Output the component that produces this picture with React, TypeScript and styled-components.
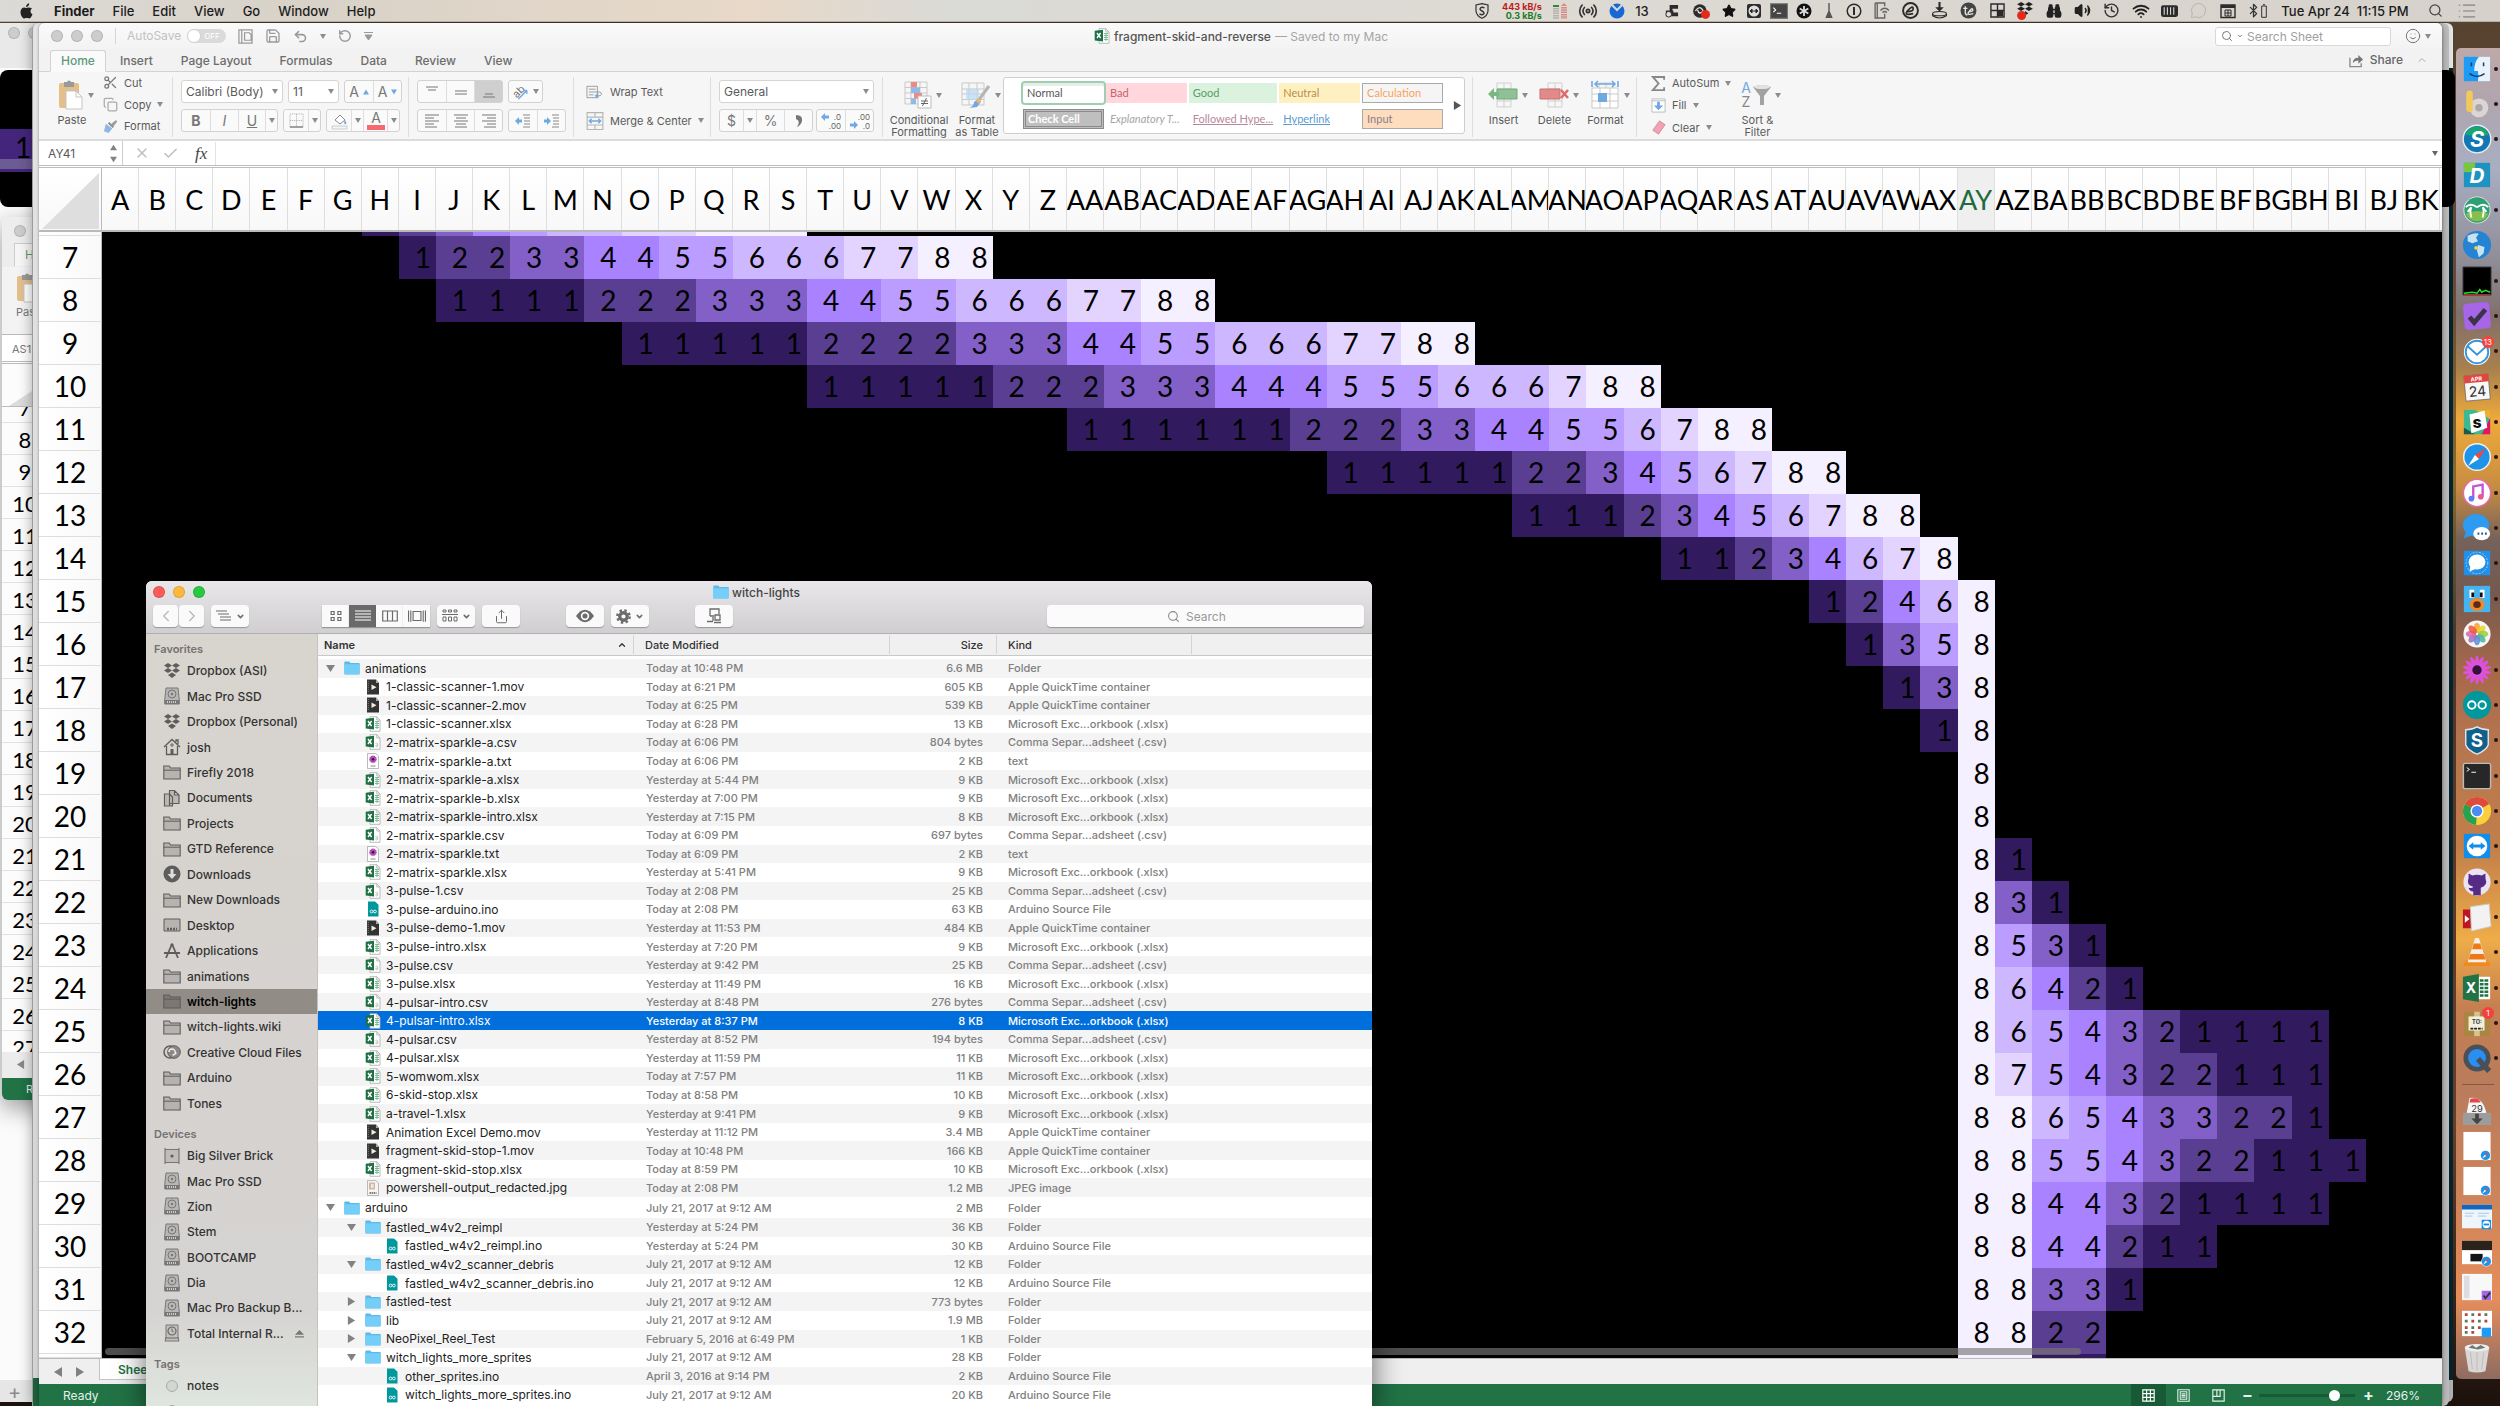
import React from "react";
import styled, { createGlobalStyle, css } from "styled-components";
import {
  Search, Wifi, Bluetooth, Volume2, Star, MessageCircle, Share, ChevronDown, ChevronLeft, ChevronRight,
  ChevronUp, Radio, Binoculars, Smile, Check, X, Undo2, RotateCcw, Save, List, History, Scissors, Copy,
} from "lucide-react";

const UI = `Inter, "Liberation Sans", sans-serif`;
const SHEET = `Lato, "Open Sans", sans-serif`;

const Global = createGlobalStyle`
  * { box-sizing: border-box; }
  html, body { margin: 0; height: 100%; overflow: hidden; }
  body { font-family: ${UI}; font-size: 12px; color: #333; background: #3a2a20; }
  button, input, select { font-family: inherit; font-size: inherit; color: inherit; border: 0; background: none; padding: 0; margin: 0; appearance: none; outline: 0; }
  a { color: inherit; text-decoration: none; }
  svg { display: block; flex: none; }
`;

/* ---------- desktop ---------- */

const Desktop = styled.main`
  position: relative;
  height: 100vh;
  overflow: hidden;
  background: linear-gradient(180deg, #54422f 0, #6b4a35 20%, #8a6a2c 34%, #4b382c 45%, #5c3826 60%, #6b3f28 80%, #1c110c 100%);
`;

const MenuBar = styled.header`
  position: absolute;
  inset: 0 0 auto 0;
  height: 22px;
  display: flex;
  align-items: center;
  padding: 0 17px 0 19px;
  background: linear-gradient(90deg, #dcdad6 0, #d8d2c8 12%, #e8d9c9 30%, #dadad6 38%, #dedad4 60%, #d6d2cb 100%);
  border-bottom: 1px solid #b5afa8;
  color: #1c1c1c;
  font-size: 13px;
`;
const MenuList = styled.nav`
  display: flex;
  gap: 18px;
  margin-left: 20px;
`;
const MenuItem = styled.button<{ $bold?: boolean }>`
  font-size: 13px;
  line-height: 20px;
  font-weight: ${(p) => (p.$bold ? 700 : 500)};
`;
const StatusArea = styled.div`
  display: flex;
  align-items: center;
  margin-left: auto;
`;
const StatusItem = styled.span<{ $w: number }>`
  width: ${(p) => p.$w}px;
  display: flex;
  align-items: center;
  justify-content: center;
  white-space: nowrap;
  font-weight: 500;
`;
const NetSpeed = styled.span`
  display: flex;
  flex-direction: column;
  text-align: right;
  font-size: 9px;
  line-height: 9px;
  font-weight: 700;
  color: #c01818;
  & > span + span { color: #1b7a25; }
`;

/* ---------- windows behind ---------- */

const RearWindow = styled.div`
  position: absolute;
  inset: 23px 47px 4px 0;
  display: flex;
  flex-direction: column;
  border-radius: 0 6px 6px 0;
  background: linear-gradient(90deg, #fbfbfb 50%, #06242e 50%);
  overflow: hidden;
`;
const RearHeader = styled.div`
  height: 45px;
  display: flex;
  gap: 8px;
  padding: 4px 0 0 8px;
  background: #e9e9e9;
`;
const RearFooter = styled.div`
  height: 22px;
  margin-top: auto;
  padding-left: 8px;
  background: linear-gradient(90deg, #e6e6e6 50%, #b5b5b5 50%);
  font-size: 20px;
  line-height: 24px;
  color: #8a8a8a;
`;
const SideWindow = styled.div`
  position: absolute;
  inset: 23px 51px 0 40px;
  border-radius: 6px;
  background: #c6c6c6;
`;
const Player = styled.div`
  position: absolute;
  inset: 70px 45px auto 0;
  height: 137px;
  padding-top: 59px;
  border-radius: 8px;
  background: #000;
`;
const PlayerCell = styled.div`
  width: 60px;
  height: 43px;
  padding-left: 15px;
  background: linear-gradient(180deg, #43267c 30px, #6c5c94 30px 40px, #43267c 40px);
  font: 28px/36px ${SHEET};
  color: #000;
`;
const BackBook = styled.div`
  position: absolute;
  left: 2px;
  top: 217px;
  width: 80px;
  height: 883px;
  display: flex;
  flex-direction: column;
  border-radius: 6px;
  overflow: hidden;
  background: #fcfcfc;
  box-shadow: 0 8px 24px rgba(0, 0, 0, 0.4);
  color: #777;
`;
const BackTop = styled.div`
  height: 50px;
  padding: 8px 0 0 12px;
  background: #ededed;
  display: flex;
  flex-direction: column;
  gap: 6px;
`;
const BackTab = styled.span`
  padding-left: 10px;
  background: #f6f6f6;
  border: 1px solid #ccc;
  border-bottom: 0;
  line-height: 22px;
  font-size: 12px;
  color: #5d9b78;
`;
const BackRibbon = styled.div`
  height: 68px;
  padding: 6px 0 0 14px;
  background: #f3f3f3;
  border-bottom: 1px solid #bbb;
  font-size: 11px;
  line-height: 18px;
`;
const BackName = styled.div`
  height: 29px;
  padding-left: 10px;
  border-bottom: 3px double #bbb;
  background: #fff;
  line-height: 28px;
  font-size: 11px;
`;
const BackCorner = styled.div`
  height: 43px;
  padding: 16px 0 0 7px;
  border-bottom: 1px solid #bbb;
`;
const BackRows = styled.div`
  flex: 1;
  overflow: hidden;
  display: flex;
  flex-direction: column;
  font: 22px/33px ${SHEET};
  color: #000;
`;
const BackRow = styled.span<{ $first?: boolean }>`
  flex: none;
  width: 46px;
  height: ${(p) => (p.$first ? 16 : 32)}px;
  text-align: center;
  border-bottom: 1px solid #e2e2e2;
  ${(p) => p.$first && css`line-height: 2px; overflow: hidden;`}
`;
const BackTabs = styled.div`
  height: 26px;
  padding: 8px 0 0 14px;
  background: #ececec;
`;
const BackStatus = styled.div`
  height: 22px;
  padding-left: 24px;
  background: #217346;
  color: #e8f3ec;
  font-size: 11px;
  line-height: 22px;
`;
const ShadeWindow = styled.div`
  position: absolute;
  inset: 23px 58px 0 32px;
  border-radius: 6px 6px 0 0;
  background: linear-gradient(180deg, #e4e4e4 0, #d3d3d3 98%, #1c5f3a 98%);
  border-left: 1px solid #9c9c9c;
  box-shadow: 0 0 14px rgba(0, 0, 0, 0.35);
`;

/* ---------- workbook ---------- */

const Workbook = styled.section`
  position: absolute;
  inset: 23px 58px 0 39px;
  display: flex;
  flex-direction: column;
  border-radius: 6px 6px 0 0;
  overflow: hidden;
  background: #f5f5f5;
  box-shadow: 0 0 3px rgba(0, 0, 0, 0.4);
  color: #5a5a5a;
`;
const TitleRow = styled.div`
  height: 26px;
  display: grid;
  grid-template-columns: 1fr auto 1fr;
  align-items: center;
  padding: 0 11px 0 12px;
  background: linear-gradient(180deg, #fafafa, #f3f3f3);
`;
const QuickTools = styled.div`
  display: flex;
  align-items: center;
  gap: 12px;
  color: #9a9a9a;
`;
const Lights = styled.div`
  display: flex;
  gap: 8px;
`;
const Light = styled.span<{ $c?: string }>`
  width: 12px;
  height: 12px;
  border-radius: 50%;
  background: ${(p) => p.$c || "#cdcdcd"};
  border: 1px solid rgba(0, 0, 0, 0.12);
`;
const AutoSave = styled.label`
  display: flex;
  align-items: center;
  gap: 6px;
  padding-left: 11px;
  border-left: 1px solid #d6d6d6;
  line-height: 16px;
  font-size: 12px;
  color: #c2c2c2;
`;
const Toggle = styled.span`
  display: flex;
  align-items: center;
  gap: 3px;
  width: 39px;
  height: 14px;
  border-radius: 7px;
  background: #dadada;
  font-size: 8px;
  color: #fff;
  input { width: 14px; height: 14px; border-radius: 50%; background: #fff; border: 1px solid #d0d0d0; }
`;
const DocTitle = styled.h1`
  display: flex;
  align-items: center;
  gap: 4px;
  margin: 0;
  font-size: 12px;
  font-weight: 500;
  color: #555;
  span { font-weight: 400; color: #a5a5a5; }
`;
const TitleRight = styled.div`
  display: flex;
  justify-content: flex-end;
  align-items: center;
  gap: 14px;
  color: #777;
`;
const Feedback = styled.button`
  display: flex;
  align-items: center;
  gap: 4px;
`;
const SheetSearch = styled.label`
  display: flex;
  align-items: center;
  gap: 4px;
  width: 176px;
  height: 19px;
  padding: 0 5px;
  border: 1px solid #d8d8d8;
  border-radius: 3px;
  background: #fff;
  input { flex: 1; min-width: 0; font-size: 12px; }
  input::placeholder { color: #a0a0a0; opacity: 1; }
`;
const TabRow = styled.div`
  height: 23px;
  display: flex;
  align-items: flex-end;
  padding: 0 14px 0 11px;
  border-bottom: 1px solid #d2d2d2;
  background: #f2f2f2;
`;
const RibbonTab = styled.button<{ $on?: boolean }>`
  height: 22px;
  padding: 0 ${(p) => (p.$on ? 10 : 14)}px;
  margin-bottom: -1px;
  font-size: 12px;
  line-height: 20px;
  font-weight: 500;
  color: #6c6c6c;
  ${(p) =>
    p.$on &&
    css`
      background: #fafafa;
      border: 1px solid #d2d2d2;
      border-bottom-color: #fafafa;
      border-radius: 3px 3px 0 0;
      color: #5d9b78;
    `}
`;
const ShareBox = styled.div`
  display: flex;
  align-items: center;
  gap: 6px;
  margin-left: auto;
  button { line-height: 22px; font-weight: 500; color: #666; }
`;
const Ribbon = styled.div`
  height: 69px;
  display: flex;
  padding-top: 5px;
  border-bottom: 2px solid #dcdcdc;
  background: #f6f6f6;
`;
const Group = styled.div<{ $w?: number; $pad?: number }>`
  width: ${(p) => (p.$w ? p.$w + "px" : "auto")};
  padding-left: ${(p) => p.$pad ?? 9}px;
  height: 60px;
  display: flex;
  border-right: 1px solid #dedede;
`;
const Rows = styled.div`
  display: flex;
  flex-direction: column;
  gap: 6px;
  padding-top: 3px;
`;
const Line = styled.div<{ $gap?: number }>`
  display: flex;
  gap: ${(p) => p.$gap ?? 5}px;
  height: 23px;
`;
const Combo = styled.label<{ $w: number }>`
  width: ${(p) => p.$w}px;
  height: 23px;
  display: flex;
  align-items: center;
  padding: 0 4px;
  border: 1px solid #d4d4d4;
  border-radius: 3px;
  background: #fff;
  select { flex: 1; min-width: 0; height: 21px; font-size: 12px; }
`;
const Seg = styled.div`
  display: flex;
  height: 23px;
  border: 1px solid #d2d2d2;
  border-radius: 3px;
  background: #fafafa;
`;
const SegButton = styled.button<{ $w?: number; $on?: boolean }>`
  width: ${(p) => p.$w ?? 28}px;
  height: 21px;
  display: flex;
  align-items: center;
  justify-content: center;
  gap: 4px;
  font-size: 14px;
  color: #777;
  background: ${(p) => (p.$on ? "#cfcfcf" : "transparent")};
  & + & { border-left: 1px solid #dedede; }
`;
const StackList = styled.div`
  display: flex;
  flex-direction: column;
  margin-top: -5px;
`;
const StackItem = styled.button`
  height: 23px;
  display: flex;
  align-items: center;
  gap: 6px;
  font-size: 11px;
  color: #5a5a5a;
  white-space: nowrap;
`;
const BigItem = styled.button<{ $w: number }>`
  width: ${(p) => p.$w}px;
  height: 61px;
  display: flex;
  flex-direction: column;
  align-items: center;
  padding-top: 3px;
  font-size: 11px;
  line-height: 12px;
  color: #5a5a5a;
`;
const BigIcon = styled.span`
  display: flex;
  align-items: center;
  gap: 4px;
  height: 30px;
  margin-bottom: 4px;
  padding-left: 8px;
`;
const Gallery = styled.div`
  display: flex;
  align-items: center;
  gap: 10px;
  width: 462px;
  height: 57px;
  padding-left: 19px;
  border: 1px solid #cfcfcf;
  border-radius: 3px;
  background: #fff;
`;
const Styles = styled.div`
  width: 420px;
  display: grid;
  grid-template-columns: repeat(5, 1fr);
  gap: 6px 2px;
`;
const StyleCell = styled.button<{ $bg?: string; $fg: string; $kind?: string }>`
  height: 20px;
  padding: 0 4px;
  text-align: left;
  font-family: ${SHEET};
  font-size: 11px;
  line-height: 18px;
  white-space: nowrap;
  color: ${(p) => p.$fg};
  background: ${(p) => p.$bg || "transparent"};
  ${(p) => p.$kind === "selected" && css`outline: 2px solid #a3cdb3; border-radius: 2px; box-shadow: inset 0 3px #e3efe7;`}
  ${(p) => p.$kind === "boxed" && css`border: 1px solid #aaa; line-height: 16px;`}
  ${(p) => p.$kind === "double" && css`border: 3px double #8a8a8a; line-height: 12px; font-weight: 700; padding: 0 2px;`}
  ${(p) => p.$kind === "link" && css`text-decoration: underline;`}
  ${(p) => p.$kind === "note" && css`font-style: italic;`}
`;
const FormulaBar = styled.div`
  height: 27px;
  display: flex;
  align-items: center;
  padding: 0 4px 0 9px;
  border-bottom: 3px double #bdbdbd;
  background: #fff;
`;
const NameBox = styled.div`
  width: 75px;
  height: 24px;
  display: flex;
  align-items: center;
  justify-content: space-between;
  padding-right: 5px;
  border-right: 1px solid #ccc;
  input { width: 50px; font-size: 12px; }
`;
const Spinner = styled.span`
  display: flex;
  flex-direction: column;
  gap: 5px;
`;
const FormulaActions = styled.div`
  display: flex;
  align-items: center;
  gap: 12px;
  padding: 0 8px 0 11px;
  color: #bdbdbd;
  border-right: 1px solid #e4e4e4;
`;
const Fx = styled.button`
  font: italic 17px/23px "Liberation Serif", serif;
  color: #444;
  padding-left: 4px;
`;
const FormulaInput = styled.input`
  flex: 1;
  height: 23px;
`;

/* ---------- sheet grid ---------- */

const SHADES = ["#000", "#311b5e", "#5a3e92", "#8360c8", "#a982ff", "#bb9dff", "#cdb7fe", "#e2d3ff", "#f5f0ff"];

const SheetArea = styled.div`
  flex: 1;
  min-height: 0;
  position: relative;
  overflow: hidden;
  background: #000;
`;
const SheetTable = styled.table`
  display: block;
  font-family: ${SHEET};
  font-size: 28px;
  color: #000;
  thead, tbody { display: block; }
`;
const SheetRow = styled.tr<{ $h: number }>`
  display: grid;
  grid-template-columns: 63px repeat(63, 1fr);
  height: ${(p) => p.$h}px;
  padding-right: 2px;
`;
const HeadRow = styled(SheetRow)`
  background: linear-gradient(180deg, #fff, #f8f8f8);
  border-bottom: 2px solid #b9b9b9;
`;
const ColHead = styled.th<{ $on?: boolean }>`
  padding: 0;
  display: flex;
  justify-content: center;
  align-items: center;
  min-width: 0;
  overflow: hidden;
  font-weight: 400;
  font-size: 27px;
  border-right: 1px solid #dedede;
  background: ${(p) => (p.$on ? "#efefef" : "transparent")};
  color: ${(p) => (p.$on ? "#1e6b40" : "#000")};
`;
const Corner = styled.th`
  padding: 0 2px 1px 4px;
  display: flex;
  align-items: flex-end;
  justify-content: flex-end;
  border-right: 1px solid #b9b9b9;
`;
const RowHead = styled.th`
  padding: 0;
  font-weight: 400;
  text-align: center;
  line-height: 42px;
  overflow: hidden;
  background: linear-gradient(90deg, #fff, #f9f9f9);
  border-bottom: 1px solid #dedede;
  border-right: 1px solid #b9b9b9;
`;
const Blank = styled.td<{ $span: number }>`
  padding: 0;
  grid-column: span ${(p) => p.$span};
`;
const Cell = styled.td<{ $v: number }>`
  padding: 0 5px 0 0;
  min-width: 0;
  overflow: hidden;
  text-align: right;
  line-height: 43px;
  background: ${(p) => SHADES[p.$v]};
`;
const ScrollThumb = styled.div`
  position: absolute;
  left: 66px;
  right: 361px;
  bottom: 3px;
  height: 7px;
  border-radius: 4px;
  background: rgba(120, 120, 120, 0.65);
`;
const SheetTabs = styled.div`
  height: 26px;
  display: flex;
  align-items: center;
  gap: 12px;
  padding-left: 14px;
  border-top: 1px solid #bbb;
  background: #efefef;
`;
const SheetTab = styled.button`
  align-self: flex-start;
  height: 21px;
  width: 96px;
  margin-left: 2px;
  padding-left: 18px;
  text-align: left;
  font-size: 12px;
  font-weight: 600;
  color: #217346;
  background: #fff;
  border: 1px solid #c4c4c4;
  border-top: 0;
`;
const StatusBar = styled.footer`
  height: 22px;
  display: flex;
  align-items: center;
  padding: 0 22px 0 24px;
  background: #217346;
  color: #e5f2ea;
`;
const ViewButtons = styled.div`
  display: flex;
  margin-left: auto;
`;
const ViewButton = styled.button<{ $on?: boolean }>`
  width: 35px;
  height: 22px;
  display: flex;
  align-items: center;
  justify-content: center;
  background: ${(p) => (p.$on ? "#185a35" : "transparent")};
`;
const Zoom = styled.div`
  display: flex;
  align-items: center;
  gap: 8px;
  padding-left: 6px;
  button { width: 9px; font-size: 16px; font-weight: 700; line-height: 20px; }
  input { width: 96px; height: 12px; background: linear-gradient(#185a35, #185a35) center / 100% 3px no-repeat; }
  input::-webkit-slider-thumb { appearance: none; width: 11px; height: 11px; border-radius: 50%; background: #fff; }
  output { padding-left: 6px; }
`;

/* ---------- finder ---------- */

const FinderWin = styled.section`
  position: absolute;
  left: 146px;
  top: 581px;
  bottom: 0;
  width: 1226px;
  display: flex;
  flex-direction: column;
  border-radius: 6px 6px 0 0;
  overflow: hidden;
  background: #fff;
  box-shadow: 0 10px 30px rgba(0, 0, 0, 0.6);
`;
const FinderTop = styled.header`
  height: 53px;
  background: linear-gradient(180deg, #e9e7e9, #d0ced0);
  border-bottom: 1px solid #b0aeb0;
`;
const FinderTitle = styled.div`
  height: 22px;
  display: grid;
  grid-template-columns: 1fr auto 1fr;
  align-items: center;
  padding: 0 12px 0 7px;
  h2 { display: flex; align-items: center; gap: 3px; margin: 0; font-size: 12px; font-weight: 500; color: #444; }
`;
const FinderTools = styled.div`
  display: flex;
  align-items: center;
  height: 26px;
  padding: 0 8px 0 7px;
  color: #6b6b6b;
`;
const ToolSet = styled.div<{ $before?: number; $split?: boolean }>`
  display: flex;
  gap: ${(p) => (p.$split ? 1 : 0)}px;
  margin-left: ${(p) => p.$before ?? 0}px;
`;
const Tool = styled.button<{ $w: number; $on?: boolean; $joined?: boolean }>`
  width: ${(p) => p.$w}px;
  height: 22px;
  display: flex;
  align-items: center;
  justify-content: center;
  gap: 4px;
  border-radius: ${(p) => (p.$joined ? 0 : 4)}px;
  background: ${(p) => (p.$on ? "#6a6a6a" : "#fafafa")};
  color: ${(p) => (p.$on ? "#fff" : "inherit")};
  box-shadow: 0 1px 1px rgba(0, 0, 0, 0.28);
`;
const FinderSearch = styled.label`
  display: flex;
  align-items: center;
  justify-content: center;
  gap: 6px;
  width: 317px;
  height: 22px;
  margin-left: auto;
  border-radius: 4px;
  background: #fbfbfb;
  box-shadow: 0 1px 1px rgba(0, 0, 0, 0.28);
  input { width: 58px; font-size: 12px; }
  input::placeholder { color: #999; opacity: 1; }
`;
const FinderBody = styled.div`
  flex: 1;
  min-height: 0;
  display: flex;
`;
const Sidebar = styled.nav`
  width: 172px;
  flex: none;
  overflow: hidden;
  padding-top: 6px;
  border-right: 1px solid #c6c2c0;
  background: linear-gradient(180deg, #d8d4ce 0, #d5d2d0 60%, #d6d4d2 88%, #dfe5df 100%);
  h3 { margin: 0; padding: 0 8px; height: 18px; font-size: 11px; line-height: 18px; font-weight: 600; color: #747170; }
`;
const SideList = styled.ul<{ $h: number }>`
  list-style: none;
  margin: 0 0 9px;
  padding: 0;
  height: ${(p) => p.$h}px;
  display: grid;
  grid-auto-rows: 1fr;
`;
const SideItem = styled.li<{ $on?: boolean }>`
  display: flex;
  align-items: center;
  padding: 0 13px 0 17px;
  background: ${(p) => (p.$on ? "#918c86" : "transparent")};
  color: ${(p) => (p.$on ? "#000" : "#333")};
  font-weight: ${(p) => (p.$on ? 600 : 500)};
  a { display: flex; flex: 1; align-items: center; gap: 6px; min-width: 0; white-space: nowrap; font-size: 12px; }
`;
const FileTable = styled.table`
  display: block;
  flex: 1;
  min-width: 0;
  overflow: hidden;
  font-size: 11px;
  thead, tbody { display: block; }
`;
const fileColumns = css`
  display: grid;
  grid-template-columns: 316px 256px 107px 195px 1fr;
`;
const FileHead = styled.tr`
  ${fileColumns}
  height: 22px;
  margin-bottom: 3px;
  background: #f1f0f1;
  border-bottom: 1px solid #c9c9c9;
  th { display: flex; align-items: center; justify-content: space-between; margin: 1px 0; padding: 0 10px 0 11px; font-weight: 500; color: #333; border-right: 1px solid #d4d4d4; }
  th:first-child { padding: 0 6px; font-weight: 600; }
  th:nth-child(3) { justify-content: flex-end; padding-right: 13px; }
  th:last-child { border: 0; }
`;
const FileBody = styled.tbody<{ $h: number }>`
  && { display: grid; }
  height: ${(p) => p.$h}px;
  grid-auto-rows: 1fr;
`;
const FileRow = styled.tr<{ $on?: boolean; $alt?: boolean }>`
  ${fileColumns}
  background: ${(p) => (p.$on ? "#006edb" : p.$alt ? "#f4f4f5" : "#fff")};
  color: ${(p) => (p.$on ? "#fff" : "#808080")};
  td { display: flex; align-items: center; min-width: 0; padding: 0 0 0 12px; white-space: nowrap; font-weight: 500; }
  td:first-child { color: ${(p) => (p.$on ? "#fff" : "#222")}; font-size: 12px; font-weight: 400; }
  td:nth-child(3) { justify-content: flex-end; padding: 0 14px 0 0; }
  td:nth-child(4) { padding-left: 11px; }
`;
const NameCell = styled.td<{ $depth: number }>`
  && { padding-left: ${(p) => 8 + p.$depth * 21}px; gap: 5px; }
`;
const Slot = styled.span<{ $w: number }>`
  flex: none;
  display: flex;
  width: ${(p) => p.$w}px;
`;

/* ---------- dock ---------- */

const Dock = styled.aside`
  position: absolute;
  right: 0;
  top: 48px;
  bottom: 27px;
  width: 44px;
  display: flex;
  flex-direction: column;
  padding: 3px 0;
  border-radius: 5px 0 0 5px;
  background: linear-gradient(180deg, #bfa9a9 0, #b0a5ae 4%, #a9aec2 9%, #8f8d98 16%, #80706c 20%, #a87f4e 24%, #f0aa3a 28%, #c78c42 33%, #75625a 37%, #75594f 41%, #a8694a 47%, #b5754f 52%, #c27f4a 60%, #efac48 67%, #c67f50 72%, #b97c5c 78%, #cc845a 86%, #e68d5c 94%, #8d6c62 100%);
`;
const DockItem = styled.button`
  flex: 1;
  min-height: 0;
  position: relative;
  display: flex;
  align-items: center;
  padding-left: 6px;
`;
const Running = styled.i`
  width: 4px;
  height: 4px;
  margin-left: 2px;
  border-radius: 50%;
  background: #2b1410;
`;
const DockRule = styled.hr`
  width: 32px;
  height: 1px;
  margin: 8px 0 8px 6px;
  border: 0;
  background: #8d5538;
`;
const Badge = styled.span`
  position: absolute;
  top: 2px;
  right: 6px;
  min-width: 12px;
  height: 12px;
  padding: 0 2px;
  border-radius: 6px;
  background: #f5413c;
  color: #fff;
  font-size: 8px;
  line-height: 12px;
  text-align: center;
`;

/* ---------- icons ---------- */

const Svg = ({ w = 16, h, vb = "0 0 16 16", children }: { w?: number; h?: number; vb?: string; children?: React.ReactNode }) => (
  <svg width={w} height={h ?? w} viewBox={vb} fill="none" aria-hidden="true">{children}</svg>
);
const Caret = ({ c = "#8c8c8c" }: { c?: string }) => <Svg w={6} h={5} vb="0 0 6 5"><path d="M0 0h6L3 5z" fill={c} /></Svg>;
const Tri = ({ dir = "down", c = "#828282", s = 9 }: { dir?: string; c?: string; s?: number }) => (
  <Svg w={s} vb="0 0 10 10">
    <path d={dir === "down" ? "M0 1h10L5 9z" : dir === "right" ? "M1 0v10l8-5z" : dir === "left" ? "M9 0v10L1 5z" : "M0 9h10L5 1z"} fill={c} />
  </Svg>
);
const Lines = ({ rows, w = 16, c = "#777" }: { rows: number[][]; w?: number; c?: string }) => (
  <Svg w={w}>{rows.map(([x, y, l], i) => <path key={i} d={`M${x} ${y}h${l}`} stroke={c} strokeWidth="1.2" />)}</Svg>
);
const ExcelDoc = ({ kind = "xlsx", s = 16 }: { kind?: string; s?: number }) => (
  <Svg w={s}>
    <path d="M5 .7h6.8L15 4v11.3H5z" fill="#fff" stroke="#a9a9a9" strokeWidth=".8" />
    <path d="M11.8.7V4H15" stroke="#a9a9a9" strokeWidth=".8" />
    {kind === "xlsx"
      ? <path d="M10 5.5h4M10 7.5h4M10 9.5h4M10 11.5h4M12 5v8" stroke="#7dba92" strokeWidth="1" />
      : <path d="M10.5 9.5q1.500-1 2.200.2v3M12.700 11q-2.400 0-2 1.300t2 0" stroke="#b7b7b7" strokeWidth=".8" />}
    <path d="M.7 2.8 9 1.800v11.600L.7 12.400z" fill="#1f7145" />
    <path d="m3 5 3.600 5M6.600 5 3 10" stroke="#fff" strokeWidth="1.400" />
  </Svg>
);
const MovDoc = () => (
  <Svg><path d="M2 .5h9L14 4v11.5H2z" fill="#333" /><path d="M3.200 2v12" stroke="#999" strokeWidth=".9" strokeDasharray="1 1" /><path d="M11 .5V4h3z" fill="#aaa" /><path d="m6.500 5.500 5 2.700-5 2.700z" fill="#f6eed6" /></Svg>
);
const TxtDoc = () => (
  <Svg><path d="M2.500.5h8.300L13.500 3v12.500h-11z" fill="#fff" stroke="#aaa" strokeWidth=".8" />
    {[0, 30, 60, 90, 120, 150].map((a) => <ellipse key={a} cx="8" cy="6.3" rx="4" ry="1.1" fill="#b148b8" transform={`rotate(${a} 8 6.3)`} />)}
    <circle cx="8" cy="6.3" r="1.2" fill="#33123a" /><path d="M5.500 13h5" stroke="#888" /></Svg>
);
const InoDoc = () => (
  <Svg><path d="M3 .5h7l3.500 3.300v11.700H3z" fill="#00979d" /><circle cx="6.600" cy="10.500" r="1.400" stroke="#fff" strokeWidth=".9" /><circle cx="9.900" cy="10.500" r="1.400" stroke="#fff" strokeWidth=".9" /></Svg>
);
const JpgDoc = () => (
  <Svg><path d="M2.500.5h8.300L13.500 3v12.500h-11z" fill="#f7f5f2" stroke="#aaa" strokeWidth=".8" /><path d="M4 2.500h6v7H4z" fill="#cfb9a6" /><path d="M6 4h2.500v4H6z" fill="#f0e8e0" /><path d="M4.500 13h7" stroke="#555" strokeWidth="1.600" strokeDasharray="1.500 .6" /></Svg>
);
const Folder = ({ s = 16 }: { s?: number }) => (
  <Svg w={s}><path d="M.3 2.200q0-.7.7-.7h4.200l1.300 1.400H15q.7 0 .7.7v10.200q0 .7-.7.7H1q-.7 0-.7-.7z" fill="#5db9ea" /><path d="M.3 4.200h15.400v9.400q0 .7-.7.7H1q-.7 0-.7-.7z" fill="#74cef8" /></Svg>
);
const FILE_ICONS: Record<string, React.ReactNode> = { mov: <MovDoc />, xlsx: <ExcelDoc />, csv: <ExcelDoc kind="csv" />, txt: <TxtDoc />, ino: <InoDoc />, jpg: <JpgDoc />, dir: <Folder /> };

const G = "#5f5d5b";
const SIDE_ICONS: Record<string, React.ReactNode> = {
  dropbox: <Svg w={18} vb="0 0 18 18"><path d="m5 1 4 2.400L5 6 1 3.500zM13 1l4 2.500L13 6 9 3.400zM5 6l4 2.600L5 11 1 8.500zM13 6l4 2.500-4 2.500-4-2.400zM9 10.500l4 2.500-4 3-4-3z" fill={G} /></Svg>,
  disk: <Svg w={18} vb="0 0 18 18"><path d="M3 1h12l1.300 12v4H1.700v-4z" fill="#b9b7b5" stroke="#777" /><circle cx="9" cy="7" r="4" stroke="#777" /><circle cx="9" cy="7" r="1.200" fill="#777" /><path d="M2 13h14v4H2z" fill="#777" /><path d="M4 15h10" stroke="#ccc" strokeWidth="2" strokeDasharray="1 1" /></Svg>,
  home: <Svg w={18} vb="0 0 18 18"><path d="M1 9 9 1.500 17 9M3.500 8v8.500h11V8M13 4V2h2v4" stroke={G} strokeWidth="1.300" /><path d="M7.500 11h3v5.500h-3z" fill={G} /><circle cx="9" cy="7" r="1.200" stroke={G} /></Svg>,
  folder: <Svg w={18} vb="0 0 18 18"><path d="M.8 3h5.400l1.400 2h9.600v11H.8z" fill="rgba(0,0,0,.15)" stroke={G} strokeWidth="1.100" /><path d="M.8 7.200h16.400" stroke={G} /></Svg>,
  docs: <Svg w={18} vb="0 0 18 18"><path d="M1.500 5h5v12h-5zM6.500 1.500h5L16 6v8.500H6.500zM11.500 1.500V6H16M6.500 5l3 3v9h-3" stroke={G} strokeWidth="1.200" fill="rgba(0,0,0,.12)" /></Svg>,
  down: <Svg w={18} vb="0 0 18 18"><circle cx="9" cy="9" r="8.500" fill={G} /><path d="M9 4v7" stroke="#ddd" strokeWidth="3" /><path d="M4.500 9h9L9 14z" fill="#ddd" /></Svg>,
  desktop: <Svg w={18} vb="0 0 18 18"><path d="M1 3h16v12H1z" fill="rgba(0,0,0,.15)" stroke={G} /><path d="M4 13h10" stroke={G} strokeWidth="2.500" strokeDasharray="2 1" /></Svg>,
  apps: <Svg w={18} vb="0 0 18 18"><path d="M9 2 3 16M9 2l6 14M1 11h16" stroke={G} strokeWidth="1.800" /><circle cx="9" cy="2.800" r="1.500" fill={G} /></Svg>,
  cloud: <Svg w={18} vb="0 0 18 18"><circle cx="7" cy="9" r="6" stroke={G} strokeWidth="1.500" /><circle cx="11" cy="9" r="6.300" fill="#8b8987" stroke={G} /><path d="M6 9q0-3 3-3t4 5M12.500 9q0 3-3 3" stroke="#eee" strokeWidth="1.400" /></Svg>,
  brick: <Svg w={18} vb="0 0 18 18"><path d="M2 1v16M16 1v16M2 2.500h14v13H2z" fill="rgba(0,0,0,.1)" stroke="#777" strokeWidth="1.200" /><circle cx="9" cy="9" r="1.600" fill={G} /></Svg>,
  time: <Svg w={18} vb="0 0 18 18"><path d="M3 1h12v12l1 4H2l1-4z" fill="#c3c1bf" stroke="#777" /><circle cx="9" cy="7" r="4" stroke="#666" strokeWidth="1.200" /><path d="M9 4.500V7l1.500 1M2 14h14" stroke="#666" /></Svg>,
  tag: <Svg w={18} vb="0 0 18 18"><circle cx="9" cy="9" r="5.500" fill="#d3d6d2" stroke="#a9aca9" /></Svg>,
};

/* ---------- data ---------- */

const ROWS: [number, number, string][] = [
  [6, 7, "123456677888"], [7, 8, "1223344556667788"], [8, 9, "111122233344556667788"], [9, 14, "11111222233344556667788"],
  [10, 19, "11111222333444555666788"], [11, 26, "1111112223344556788"], [12, 33, "11111223456788"], [13, 38, "11123456788"],
  [14, 42, "11234678"], [15, 46, "12468"], [16, 47, "1358"], [17, 48, "138"], [18, 49, "18"], [19, 50, "8"], [20, 50, "8"],
  [21, 50, "81"], [22, 50, "831"], [23, 50, "8531"], [24, 50, "86421"], [25, 50, "8654321111"], [26, 50, "8754322111"],
  [27, 50, "8865433221"], [28, 50, "88554322111"], [29, 50, "8844321111"], [30, 50, "8844211"], [31, 50, "88331"], [32, 50, "8822"], [33, 50, "8811"],
];
const colName = (i: number) => (i < 26 ? "" : String.fromCharCode(64 + Math.floor(i / 26))) + String.fromCharCode(65 + (i % 26));
const COLS = Array.from({ length: 63 }, (_, i) => colName(i));

type F = [depth: number, name: string, date: string, size: string, open?: boolean];
const FILES: F[] = [
  [0, "animations", "Today at 10:48 PM", "6.6 MB", true],
  [1, "1-classic-scanner-1.mov", "Today at 6:21 PM", "605 KB"],
  [1, "1-classic-scanner-2.mov", "Today at 6:25 PM", "539 KB"],
  [1, "1-classic-scanner.xlsx", "Today at 6:28 PM", "13 KB"],
  [1, "2-matrix-sparkle-a.csv", "Today at 6:06 PM", "804 bytes"],
  [1, "2-matrix-sparkle-a.txt", "Today at 6:06 PM", "2 KB"],
  [1, "2-matrix-sparkle-a.xlsx", "Yesterday at 5:44 PM", "9 KB"],
  [1, "2-matrix-sparkle-b.xlsx", "Yesterday at 7:00 PM", "9 KB"],
  [1, "2-matrix-sparkle-intro.xlsx", "Yesterday at 7:15 PM", "8 KB"],
  [1, "2-matrix-sparkle.csv", "Today at 6:09 PM", "697 bytes"],
  [1, "2-matrix-sparkle.txt", "Today at 6:09 PM", "2 KB"],
  [1, "2-matrix-sparkle.xlsx", "Yesterday at 5:41 PM", "9 KB"],
  [1, "3-pulse-1.csv", "Today at 2:08 PM", "25 KB"],
  [1, "3-pulse-arduino.ino", "Today at 2:08 PM", "63 KB"],
  [1, "3-pulse-demo-1.mov", "Yesterday at 11:53 PM", "484 KB"],
  [1, "3-pulse-intro.xlsx", "Yesterday at 7:20 PM", "9 KB"],
  [1, "3-pulse.csv", "Yesterday at 9:42 PM", "25 KB"],
  [1, "3-pulse.xlsx", "Yesterday at 11:49 PM", "16 KB"],
  [1, "4-pulsar-intro.csv", "Yesterday at 8:48 PM", "276 bytes"],
  [1, "4-pulsar-intro.xlsx", "Yesterday at 8:37 PM", "8 KB"],
  [1, "4-pulsar.csv", "Yesterday at 8:52 PM", "194 bytes"],
  [1, "4-pulsar.xlsx", "Yesterday at 11:59 PM", "11 KB"],
  [1, "5-womwom.xlsx", "Today at 7:57 PM", "11 KB"],
  [1, "6-skid-stop.xlsx", "Today at 8:58 PM", "10 KB"],
  [1, "a-travel-1.xlsx", "Yesterday at 9:41 PM", "9 KB"],
  [1, "Animation Excel Demo.mov", "Yesterday at 11:12 PM", "3.4 MB"],
  [1, "fragment-skid-stop-1.mov", "Today at 10:48 PM", "166 KB"],
  [1, "fragment-skid-stop.xlsx", "Today at 8:59 PM", "10 KB"],
  [1, "powershell-output_redacted.jpg", "Today at 2:08 PM", "1.2 MB"],
];
const ARDUINO: F[] = [[0, "arduino", "July 21, 2017 at 9:12 AM", "2 MB", true]];
const SKETCHES: F[] = [
  [1, "fastled_w4v2_reimpl", "Yesterday at 5:24 PM", "36 KB", true],
  [2, "fastled_w4v2_reimpl.ino", "Yesterday at 5:24 PM", "30 KB"],
  [1, "fastled_w4v2_scanner_debris", "July 21, 2017 at 9:12 AM", "12 KB", true],
  [2, "fastled_w4v2_scanner_debris.ino", "July 21, 2017 at 9:12 AM", "12 KB"],
  [1, "fastled-test", "July 21, 2017 at 9:12 AM", "773 bytes", false],
  [1, "lib", "July 21, 2017 at 9:12 AM", "1.9 MB", false],
  [1, "NeoPixel_Reel_Test", "February 5, 2016 at 6:49 PM", "1 KB", false],
  [1, "witch_lights_more_sprites", "July 21, 2017 at 9:12 AM", "28 KB", true],
  [2, "other_sprites.ino", "April 3, 2016 at 9:14 PM", "2 KB"],
  [2, "witch_lights_more_sprites.ino", "July 21, 2017 at 9:12 AM", "20 KB"],
];
const KINDS: Record<string, string> = {
  dir: "Folder", mov: "Apple QuickTime container", xlsx: "Microsoft Exc...orkbook (.xlsx)", csv: "Comma Separ...adsheet (.csv)",
  txt: "text", ino: "Arduino Source File", jpg: "JPEG image",
};
const Files = ({ list, h, shift = 0 }: { list: F[]; h: number; shift?: number }) => (
  <FileBody $h={h}>
    {list.map(([depth, name, date, size, open], i) => {
      const kind = open === undefined ? name.split(".").pop()! : "dir";
      const on = name === "4-pulsar-intro.xlsx";
      return (
        <FileRow key={name} $on={on} $alt={(i + shift) % 2 === 0}>
          <NameCell $depth={depth}>
            <Slot $w={depth === 2 ? 11 : 13}>{open !== undefined && <Tri dir={open ? "down" : "right"} />}</Slot>
            {FILE_ICONS[kind]}{name}
          </NameCell>
          <td>{date}</td><td>{size}</td><td>{KINDS[kind]}</td><td />
        </FileRow>
      );
    })}
  </FileBody>
);

const FAVORITES: [string, string][] = [
  ["dropbox", "Dropbox (ASI)"], ["disk", "Mac Pro SSD"], ["dropbox", "Dropbox (Personal)"], ["home", "josh"], ["folder", "Firefly 2018"],
  ["docs", "Documents"], ["folder", "Projects"], ["folder", "GTD Reference"], ["down", "Downloads"], ["folder", "New Downloads"],
  ["desktop", "Desktop"], ["apps", "Applications"], ["folder", "animations"], ["folder", "witch-lights"], ["folder", "witch-lights.wiki"],
  ["cloud", "Creative Cloud Files"], ["folder", "Arduino"], ["folder", "Tones"],
];
const DEVICES: [string, string][] = [
  ["brick", "Big Silver Brick"], ["disk", "Mac Pro SSD"], ["disk", "Zion"], ["disk", "Stem"], ["disk", "BOOTCAMP"], ["disk", "Dia"],
  ["disk", "Mac Pro Backup B..."], ["time", "Total Internal R..."],
];
const SideSection = ({ title, items, h }: { title: string; items: [string, string][]; h: number }) => (
  <>
    <h3>{title}</h3>
    <SideList $h={h}>
      {items.map(([icon, label], i) => (
        <SideItem key={i} $on={label === "witch-lights"}>
          <a href="#">{SIDE_ICONS[icon]}{label}</a>
          {icon === "time" && <Svg w={9} vb="0 0 10 10"><path d="M0 6.500h10L5 1zM0 8h10v1.500H0z" fill="#777" /></Svg>}
        </SideItem>
      ))}
    </SideList>
  </>
);

/* ---------- dock artwork ---------- */

const D = ({ children }: { children: React.ReactNode }) => <Svg w={30} vb="0 0 32 32">{children}</Svg>;
const T = ({ x = 16, y = 22, s = 18, c = "#fff", w = 700, i, children }: any) => (
  <text x={x} y={y} fontSize={s} fill={c} fontWeight={w} fontStyle={i ? "italic" : "normal"} textAnchor="middle" fontFamily="Inter, sans-serif">{children}</text>
);
const Compass = ({ x = 16, y = 16, r = 14 }: { x?: number; y?: number; r?: number }) => (
  <g transform={`translate(${x} ${y}) scale(${r / 14})`}>
    <circle r="14" fill="#f0f0f0" /><circle r="12.500" fill="#1d93ea" />
    <path d="M9-9 2 2-2-2z" fill="#f4463c" /><path d="M-9 9 2 2-2-2z" fill="#fff" />
  </g>
);
const petals = (n: number, rx: number, ry: number, off: number, fill: (i: number) => string, op = 1) =>
  Array.from({ length: n }, (_, i) => <ellipse key={i} cx="16" cy={16 - off} rx={rx} ry={ry} fill={fill(i)} opacity={op} transform={`rotate(${(360 / n) * i} 16 16)`} />);
const HUES = ["#f7a328", "#e8d32c", "#9bcb3c", "#45b59c", "#5a8fd6", "#9a6fc4", "#d867a8", "#f0553f"];
const Thumb = ({ children }: { children?: React.ReactNode }) => <D><path d="M1.500 1h29v30h-29z" fill="#fff" />{children}</D>;

type DockEntry = { name: string; run?: boolean; badge?: string; art: React.ReactNode };
const APPS: DockEntry[] = [
  { name: "Finder", run: true, art: <D><path d="M2 3h28v26H2z" fill="#1d9bf6" /><path d="M18 3h12v26H17q1-6 0-11h-4q0-9 5-15z" fill="#e9f2fb" /><path d="M8 21q8 6 16 0M10 9v4M23 9v4" stroke="#1b3c66" strokeWidth="1.600" /></D> },
  { name: "Backup", run: true, art: <D><circle cx="18" cy="20" r="7" stroke="#dcd6d2" strokeWidth="6" /><path d="M8 5v16" stroke="#f2c95a" strokeWidth="7" strokeLinecap="round" /></D> },
  { name: "Sync", run: true, art: <D><circle cx="16" cy="16" r="15.500" fill="#e9eef0" /><circle cx="16" cy="16" r="14" fill="#1277b5" /><path d="M3.500 12a13 13 0 0 1 25 0z" fill="#1aa56a" /><T y={24} s={23} i>S</T></D> },
  { name: "Drafts", art: <D><path d="M2 3h28v26H2z" fill="#1d93c2" /><path d="M2 3h12v10H2z" fill="#7cc63f" /><T y={24} s={22} i>D</T></D> },
  { name: "Palm", run: true, art: <D><circle cx="16" cy="16" r="14.500" fill="#e1e8df" /><circle cx="16" cy="16" r="13.500" fill="#2fa074" /><path d="M4 20a13 13 0 0 0 24 0q-12-6-24 0z" fill="#85c04b" /><path d="M10 24q-2-7 0-11M22 24q2-7 0-11M4 13q5-5 12 0M16 13q7-5 12 0M10 13l-4 5M22 13l4 5" stroke="#fff" strokeWidth="2" /></D> },
  { name: "Globe", art: <D><circle cx="16" cy="16" r="15" fill="#2583d4" /><path d="M6 6q7-4 12-2l-3 4 2 4-6 2-5-2zM17 16l7 2-1 7-5 4-2-7z" fill="#c7e2f0" /><circle cx="15" cy="19" r="2" fill="#f2d649" /></D> },
  { name: "Activity", run: true, art: <D><path d="M1 1h30v30H1z" fill="#000" stroke="#444" /><path d="m2 29 9-1 5 1 3-4 2 3 4-2 5 2" stroke="#24e02a" strokeWidth="1.500" /><path d="M2 30.500h28" stroke="#d32a1c" /></D> },
  { name: "OmniFocus", run: true, art: <D><rect x="2" y="2" width="28" height="28" rx="4" fill="#a765e8" transform="rotate(-5 16 16)" /><path d="m8 17 5 6L25 9" stroke="#3c3346" strokeWidth="5" /></D> },
  { name: "Mail", run: true, badge: "13", art: <D><circle cx="16" cy="17" r="14" fill="#fff" /><circle cx="16" cy="17" r="12" stroke="#3595dd" strokeWidth="2" /><path d="m6 11 10 9 10-9" stroke="#3595dd" strokeWidth="2" /></D> },
  { name: "Calendar", run: true, art: <D><g transform="rotate(-5 16 16)"><path d="M3 3h26v27H3z" fill="#f8f8f8" stroke="#666" strokeWidth=".8" /><path d="M3 3h26v8H3z" fill="#e2453e" /><T y={9.5} s={6}>APR</T><T y={26} s={15} c="#333" w={400}>24</T></g></D> },
  { name: "Slack", run: true, art: <D><path d="M2 3h28v26H2z" fill="#3eb890" /><path d="M14 3h16v10z" fill="#ecb12f" /><path d="M30 12v17h-9z" fill="#e01563" /><path d="M2 22 14 29H2z" fill="#1c5a49" /><path d="m8 8 16-4 3 18-17 6z" fill="#fff" /><T y={22} s={17} c="#111" w={800}>s</T></D> },
  { name: "Safari", run: true, art: <D><Compass r={15} /></D> },
  { name: "iTunes", run: true, art: <D><circle cx="16" cy="16" r="14.500" fill="#fff" stroke="#e868b0" strokeWidth="1.500" /><path d="M12 22V9l10-2v13" stroke="#c255d6" strokeWidth="2.500" /><circle cx="10" cy="22" r="3" fill="#5f7ef0" /><circle cx="20" cy="20" r="3" fill="#f0558c" /></D> },
  { name: "Messages", run: true, art: <D><ellipse cx="15" cy="13" rx="14" ry="12" fill="#2e9af0" /><path d="m4 20-2 7 8-3z" fill="#2e9af0" /><ellipse cx="21" cy="22" rx="9" ry="7" fill="#fff" /><path d="M16.500 22h10" stroke="#26609a" strokeWidth="2.500" strokeDasharray="2 2" /></D> },
  { name: "Signal", run: true, art: <D><path d="M2 3h28v26H2z" fill="#2090ea" /><ellipse cx="16" cy="15" rx="9" ry="8" fill="#fff" /><path d="m9 18-1 7 7-3z" fill="#fff" /><circle cx="16" cy="16" r="11.500" stroke="#9fd0f7" strokeDasharray="2 1.500" /></D> },
  { name: "Tweetbot", run: true, art: <D><path d="M2 2h28v28H2z" fill="#43b4f0" /><path d="M8 6h5v9H8zM19 6h5v9h-5z" fill="#fff" /><path d="M10 9h3v5h-3zM19 9h3v5h-3z" fill="#111" /><ellipse cx="16" cy="22" rx="8" ry="7" fill="#f08a30" /><ellipse cx="16" cy="22" rx="4" ry="3.500" fill="#5c2c14" /></D> },
  { name: "Photos", art: <D><circle cx="16" cy="16" r="14.500" fill="#f6f6f6" />{petals(8, 3.4, 5.5, 6.5, (i) => HUES[i], 0.85)}</D> },
  { name: "TextMate", run: true, art: <D>{petals(14, 2, 7, 8.5, () => "#dd52dc")}<circle cx="16" cy="16" r="5" fill="#34123a" /></D> },
  { name: "Arduino", run: true, art: <D><circle cx="16" cy="16" r="15" fill="#00979d" /><circle cx="10.500" cy="16" r="4" stroke="#fff" strokeWidth="2" /><circle cx="21.500" cy="16" r="4" stroke="#fff" strokeWidth="2" /></D> },
  { name: "Sublime", run: true, art: <D><path d="M4 5q7 0 12-3 5 3 12 3v16q-2 6-12 10Q6 27 4 21z" fill="#11608c" stroke="#dce8ee" strokeWidth="1.500" /><T y={23} s={20}>S</T></D> },
  { name: "Terminal", run: true, art: <D><rect x="1.500" y="2.500" width="29" height="27" rx="2" fill="#272727" stroke="#bbb" strokeWidth="1.500" /><path d="m5 7 3 2-3 2M10 12h5" stroke="#fff" /></D> },
  { name: "Chrome", run: true, art: <D><circle cx="16" cy="16" r="15" fill="#f9cf3b" /><path d="M16 16 3 8.500a15 15 0 0 1 26 0z" fill="#de4a3c" /><path d="M16 16 3 8.500a15 15 0 0 0 12 22.500z" fill="#29a152" /><circle cx="16" cy="16" r="7" fill="#fff" /><circle cx="16" cy="16" r="5.500" fill="#4b8bf4" /></D> },
  { name: "TeamViewer", run: true, art: <D><path d="M2 3h28v26H2z" fill="#108ee9" /><circle cx="16" cy="16" r="11" fill="#fff" /><path d="m7 16 5-4v2.500h8V12l5 4-5 4v-2.500h-8V20z" fill="#108ee9" /></D> },
  { name: "GitHub", run: true, art: <D><circle cx="16" cy="16" r="14.500" fill="#e9e4f4" /><path d="M7 7l4 2q5-1.500 10 0l4-2v5q3 8-5 10v8h-8v-4q-4 0-5-4 4 1 5-1-8-2-5-9z" fill="#562b86" /></D> },
  { name: "Flash", run: true, art: <D><path d="M1 8h10v20H1z" fill="#c01420" /><path d="m3 14 5 4-5 4z" fill="#fff" /><path d="M9 5 29 2l2 24-21 5z" fill="#f2f2f2" stroke="#c9c9c9" /></D> },
  { name: "VLC", run: true, art: <D><path d="m4 25-3 6h30l-3-6z" fill="#f08a1c" /><path d="M14 1h4l8 26H6z" fill="#f3f0ec" /><path d="M12.500 7h7l1.700 6H10.800zM9 18h14l2 6H7z" fill="#ee7a15" /></D> },
  { name: "Excel", run: true, art: <D><path d="M16 4h14v24H16z" fill="#fff" /><path d="M19 8h10M19 12h10M19 16h10M19 20h10M19 24h10" stroke="#217346" strokeWidth="2.500" strokeDasharray="4 1" /><path d="M1 4 18 1v30L1 28z" fill="#217346" /><T x={9.5} y={21} s={15}>X</T></D> },
  { name: "Deliveries", run: true, badge: "1", art: <D><path d="M2 4h28v26H2z" fill="#a98742" /><path d="M13 4h6v26h-6z" fill="#d6c389" /><path d="M7 9h17v15H7z" fill="#f4efdc" /><T y={17} s={6} c="#333">TO:</T><path d="M9 22h13" stroke="#222" strokeWidth="2" strokeDasharray="3 1" /></D> },
  { name: "QuickTime", run: true, art: <D><circle cx="16" cy="16" r="12" fill="#2a8ff2" stroke="#4a5058" strokeWidth="5" /><path d="m17 17 12 13" stroke="#4a5058" strokeWidth="6" /></D> },
];
const STACKS: DockEntry[] = [
  { name: "Downloads", art: <D><path d="M8 2q14-2 18 16H5z" fill="#f7f7f7" /><path d="M9 3q8-2 11 4H8z" fill="#e24848" /><T y={17} s={10} c="#333" w={400}>29</T><path d="M1 18h30v13H1z" fill="#9c9c9c" /><path d="M14 19h4v5h4l-6 6-6-6h4z" fill="#444" /></D> },
  { name: "Page one", art: <Thumb><Compass x={25} y={26} r={5.5} /></Thumb> },
  { name: "Page two", art: <Thumb><Compass x={25} y={26} r={5.5} /></Thumb> },
  { name: "Remote window", art: <D><path d="M0 3h32v25H0z" fill="#eef5fb" /><path d="M0 3h32v5H0z" fill="#1166c2" /><path d="M3 12h10M3 15h8M17 12h12M17 15h9" stroke="#a3c8ea" /><path d="M21 19h10v10H21z" fill="#108ee9" /><circle cx="26" cy="24" r="4" fill="#fff" /><path d="M23 24h6" stroke="#108ee9" strokeWidth="2" /></D> },
  { name: "Photo page", art: <D><path d="M0 4h32v25H0z" fill="#fff" /><path d="M0 4h32v10H0z" fill="#2c221c" /><path d="M9 18h13v8H9z" fill="#141414" /><Compass x={26} y={26} r={5.5} /></D> },
  { name: "Task window", art: <D><path d="M0 2h32v28H0z" fill="#f8f8f8" /><path d="M2 4h6v24H2z" fill="#dcdce2" /><path d="M21 20h10v10H21z" fill="#a765e8" /><path d="m23 25 2 3 5-6" stroke="#333" strokeWidth="2" /></D> },
  { name: "Icon window", art: <D><path d="M0 3h32v27H0z" fill="#fff" /><path d="M3 7h3M17 7h3M10 14h3M24 14h3M3 21h3M17 21h3M10 26h3" stroke="#b8443d" strokeWidth="3" /><path d="M10 7h3M24 7h3M3 14h3M17 14h3M10 21h3M3 26h3" stroke="#5c7a60" strokeWidth="3" /><path d="M21 21h10v10H21z" fill="#1d9bf6" /></D> },
  { name: "Trash", art: <D><path d="M3 5h26l-4 25q-9 3-18 0z" fill="#d9d7d6" /><ellipse cx="16" cy="5" rx="13" ry="4" fill="#efefef" /><path d="M7 5l4-3 4 3 5-3 5 3-8 2z" fill="#6f7a74" /><path d="m9 10 2 18M23 10l-2 18M16 10v19" stroke="#bdbab8" /></D> },
];
const DockEntryView = ({ e }: { e: DockEntry }) => (
  <DockItem aria-label={e.name}>{e.art}{e.run && <Running />}{e.badge && <Badge>{e.badge}</Badge>}</DockItem>
);

/* ---------- menu bar extras ---------- */

const K = "#2b2b2b";
const EXTRAS: [number, React.ReactNode][] = [
  [30, <Svg w={15}><path d="M2 8h8v6H2zM6 2h9v4H9v4h6v4H6z" fill={K} /><circle cx="5" cy="12" r="3" fill="#ddd" stroke={K} /></Svg>],
  [30, <Svg w={18}><circle cx="7" cy="8" r="6" fill={K} /><path d="M3 8q4-6 7 0-4 4-5-1" stroke="#ddd" strokeWidth="1.200" /><circle cx="12" cy="11" r="4" fill="#e3281c" /></Svg>],
  [25, <Star size={14} fill="#111" color="#111" />],
  [25, <Svg><rect x="1" y="1" width="14" height="14" rx="2" fill={K} /><circle cx="8" cy="8" r="5.500" fill="#ddd" /><path d="m4 8 2-2v4zM12 8l-2-2v4zM5 8h6" fill={K} stroke={K} /></Svg>],
  [25, <Svg w={18}><path d="M.5 1.500h15v13H.5z" fill="#444" stroke="#777" /><path d="m3 5 2 2-2 2M6 10h4" stroke="#fff" /></Svg>],
  [25, <Svg><circle cx="8" cy="8" r="7.500" fill="#111" /><path d="M8 3v10M3.700 5.500l8.600 5M12.300 5.500l-8.600 5" stroke="#ddd" strokeWidth="1.800" /></Svg>],
  [25, <Svg><path d="M7.300 0h1.400v8l3 7H4.300l3-7z" fill="#555" /></Svg>],
  [26, <Svg><circle cx="8" cy="8" r="6.800" stroke={K} strokeWidth="1.500" /><path d="M7 4h2v8H7z" fill={K} /></Svg>],
  [29, <Svg w={17}><path d="M2 1h9v3M2 1v14h9v-4M4 1v14" stroke="#666" strokeWidth="1.300" /><path d="M7 8q4-4 8 0M9 10q2-2 4 0" stroke="#666" strokeWidth="1.400" /></Svg>],
  [29, <Svg w={17}><circle cx="8" cy="8" r="7" stroke={K} strokeWidth="1.800" /><path d="M5 9q6 0 5.500-3T5.500 8t5 3" stroke={K} strokeWidth="1.600" /></Svg>],
  [29, <Svg w={17}><path d="M7 0h2v5h3L8 9 4 5h3z" fill={K} /><ellipse cx="8" cy="11" rx="6.500" ry="2" stroke={K} /><path d="M1.500 11v2q6.500 4 13 0v-2" stroke={K} /></Svg>],
  [29, <Svg w={17}><circle cx="8" cy="8" r="7.500" fill="#444" /><path d="M5 4v6q0 2 2 2M3 6h4M8.500 9q4 0 3.500-2T8.500 9t4 2" stroke="#e5e2dc" strokeWidth="1.300" /></Svg>],
  [28, <Svg w={15}><path d="M1 1h14v14H1zM8 1v14M1 8h14" stroke={K} strokeWidth="1.500" /><path d="M8 8h6v6H8z" fill={K} /></Svg>],
  [28, <Svg w={18}><path d="m4.500 0 3.500 2-3.500 2L1 2zM11.500 0 15 2l-3.500 2L8 2zM4.500 4 8 6 4.500 8 1 6zM11.500 4 15 6l-3.500 2L8 6zM8 8l3 2-3 2z" fill="#222" /><circle cx="5" cy="12" r="4" fill="#e3281c" /></Svg>],
  [29, <Binoculars size={16} fill="#222" color="#222" />],
  [29, <Volume2 size={17} fill="#222" color="#222" />],
  [29, <History size={17} color="#333" />],
  [29, <Wifi size={18} color="#222" strokeWidth={2.5} />],
  [29, <Svg w={17}><rect x="0" y="3" width="16" height="11" rx="2" fill={K} /><path d="M3 5v7M6 5v7M9 5v7M12 5v7" stroke="#ddd" /></Svg>],
  [29, <MessageCircle size={17} color="#b3b0ab" strokeWidth={1.3} />],
  [29, <Svg w={16}><path d="M1 2h14v12.500H1z" stroke={K} strokeWidth="1.400" /><path d="M1 2h14v3H1z" fill={K} /><path d="M5 7h6v6H5zM8 7v6M5 10h6" stroke={K} /></Svg>],
  [29, <><Bluetooth size={15} color="#333" /><Svg w={6} h={14} vb="0 0 6 14"><path d="M.7 2h4.600v11.300H.7zM2 .7h2" stroke="#333" /></Svg></>],
];

/* ---------- ribbon artwork ---------- */

const Cond = (
  <Svg w={28} vb="0 0 28 28"><path d="M1 1h22v22H1zM1 6.500h22M1 12h22M1 17.500h22M7 1v22M16 1v22" stroke="#c9c9c9" /><path d="M7 1h6v5.500H7zM10 12h8v5.500h-8z" fill="#ee8a86" /><path d="M7 6.500h9V12H7zM7 17.500h5V23H7z" fill="#8dbcec" /><path d="M14 15h13v12H14z" fill="#fff" stroke="#bbb" /><path d="M17 20h7M17 22.500h7M22.500 17l-4 8" stroke="#666" /></Svg>
);
const TableArt = (
  <Svg w={30} vb="0 0 30 28"><path d="M1 2h22v22H1zM1 8h22M1 13h22M1 18.500h22M8 2v22M16 2v22" stroke="#c9c9c9" /><path d="M5 8h13v11H5z" fill="#bcd8f4" opacity=".7" /><path d="M28 5 17 20" stroke="#b5b5b5" strokeWidth="3" /><path d="m17 18 3 3-4 5-8 1q5-2 5-6z" fill="#74a9e0" /><path d="m17 17 3 3-2 3-3-3z" fill="#eab76e" /></Svg>
);
const CellArt = ({ kind }: { kind: string }) => (
  <Svg w={30} vb="0 0 30 28">
    <path d="M9 2h14v24H9zM16 2v24M9 8h14M9 20h14" stroke="#cfcfcf" />
    {kind === "insert" && <><path d="M9 8h20v10H9z" fill="#8fc197" stroke="#6fa878" /><path d="m0 13 6-6v4h5v4H6v4z" fill="#79b783" /></>}
    {kind === "delete" && <><path d="M1 8h20v10H1z" fill="#e08a8a" stroke="#c97171" /><path d="m22 9 7 8M29 9l-7 8" stroke="#e06a6a" strokeWidth="2.500" /></>}
    {kind === "format" && <><path d="M2 7h26v20H2zM2 13h26M2 20h26M10 7v20M20 7v20" stroke="#c9c9c9" fill="#fff" /><path d="M8 12h9v9H8z" fill="#6fa9e4" /><path d="M2 0v6M28 0v6M5 3h20M8 0 5 3l3 3M22 0l3 3-3 3" stroke="#6fa9e4" strokeWidth="1.600" /></>}
  </Svg>
);
const Clip = (
  <Svg w={26} h={30} vb="0 0 26 30"><rect x="1" y="3" width="20" height="25" rx="2" fill="#e3bf8b" /><path d="M6 2h10v5H6z" fill="#9a9a9a" /><circle cx="11" cy="2.500" r="2" fill="#9a9a9a" /><path d="M8 11h10l6 6v12H8z" fill="#fff" stroke="#c5c5c5" /><path d="M18 11v6h6" stroke="#c5c5c5" /></Svg>
);
const alignRow = (k: string) => ({
  top: [[2, 3, 12], [4, 6, 8]], mid: [[2, 7, 12], [2, 10, 12]], bot: [[4, 10, 8], [2, 13, 12]],
  left: [[1, 2, 14], [1, 5, 9], [1, 8, 14], [1, 11, 9], [1, 14, 12]], center: [[1, 2, 14], [3, 5, 10], [1, 8, 14], [3, 11, 10], [2, 14, 12]],
  right: [[1, 2, 14], [6, 5, 9], [1, 8, 14], [6, 11, 9], [3, 14, 12]],
}[k] as number[][]);
const Indent = ({ out }: { out?: boolean }) => (
  <Svg><path d="M8 2h7M9 5h6M9 8h6M9 11h6M8 14h7" stroke="#888" /><path d={out ? "M0 8l4-4v2.500h3v3H4V12z" : "M7 8 3 4v2.500H0v3h3V12z"} fill="#6fa9e4" /></Svg>
);

export default function App() {
  return (
    <Desktop>
      <Global />
      <RearWindow>
        <RearHeader><Light /><Light /></RearHeader>
        <RearFooter>+</RearFooter>
      </RearWindow>
      <SideWindow />
      <BackBook>
        <BackTop><Light /><BackTab>Home</BackTab></BackTop>
        <BackRibbon>{Clip}Paste</BackRibbon>
        <BackName>AS1</BackName>
        <BackCorner><Svg w={40} h={26} vb="0 0 40 26"><path d="M0 26 40 0v26z" fill="#dcdcdc" /></Svg></BackCorner>
        <BackRows>
          {Array.from({ length: 21 }, (_, i) => <BackRow key={i} $first={i === 0}>{i + 7}</BackRow>)}
        </BackRows>
        <BackTabs><Tri dir="left" c="#888" /></BackTabs>
        <BackStatus>Ready</BackStatus>
      </BackBook>
      <Player><PlayerCell>1</PlayerCell></Player>
      <ShadeWindow />

      <Workbook>
        <TitleRow>
          <QuickTools>
            <Lights><Light /><Light /><Light /></Lights>
            <AutoSave>AutoSave<Toggle><input type="checkbox" />OFF</Toggle></AutoSave>
            <Svg w={15}><path d="M1 1h14v14H1zM4 1v14M7 4h5l2 2v6H7z" stroke="#999" strokeWidth="1.300" /></Svg>
            <Save size={16} /><Undo2 size={15} strokeWidth={2.5} /><Caret /><RotateCcw size={14} strokeWidth={2.5} />
            <Svg w={9} h={9} vb="0 0 9 9"><path d="M0 .5h9M1 3h7L4.500 8z" fill="#999" stroke="#999" /></Svg>
          </QuickTools>
          <DocTitle><ExcelDoc s={16} />fragment-skid-and-reverse <span>— Saved to my Mac</span></DocTitle>
          <TitleRight>
            <SheetSearch><Search size={12} /><ChevronDown size={6} strokeWidth={4} /><input aria-label="Search Sheet" placeholder="Search Sheet" /></SheetSearch>
            <Feedback aria-label="Feedback"><Smile size={16} strokeWidth={1.5} /><Caret /></Feedback>
          </TitleRight>
        </TitleRow>
        <TabRow>
          {["Home", "Insert", "Page Layout", "Formulas", "Data", "Review", "View"].map((t) => <RibbonTab key={t} $on={t === "Home"}>{t}</RibbonTab>)}
          <ShareBox>
            <Svg w={15}><path d="M1 5v9.500h12V11" stroke="#888" strokeWidth="1.400" /><path d="M4 11q0-6 6-6V2l5 5-5 4.500V8Q6 8 4 11z" fill="#777" /></Svg>
            <button>Share</button><Slot $w={1} /><ChevronUp size={12} color="#aaa" />
          </ShareBox>
        </TabRow>
        <Ribbon>
          <Group $w={134} $pad={10}>
            <BigItem $w={46}><BigIcon>{Clip}<Caret /></BigIcon>Paste</BigItem>
            <Slot $w={8} />
            <StackList>
              <StackItem><Scissors size={15} color="#777" />Cut</StackItem>
              <StackItem><Copy size={15} color="#aaa" />Copy <Caret /></StackItem>
              <StackItem><Svg w={15}><path d="m9 5 5-4 1 2-4 5z" fill="#999" /><path d="m3 5 7 5-4 5-5-2z" fill="#8fb7e4" /><path d="m6 4 5 5" stroke="#888" strokeWidth="2" /></Svg>Format</StackItem>
            </StackList>
          </Group>
          <Group $w={236} $pad={8}>
            <Rows>
              <Line>
                <Combo $w={102}><select aria-label="Font"><option>Calibri (Body)</option></select><Caret /></Combo>
                <Combo $w={51}><select aria-label="Font size"><option>11</option></select><Caret /></Combo>
                <Seg><SegButton>A<Tri dir="up" c="#6fa9e4" s={6} /></SegButton><SegButton>A<Tri c="#6fa9e4" s={6} /></SegButton></Seg>
              </Line>
              <Line>
                <Seg><SegButton><b>B</b></SegButton><SegButton><i>I</i></SegButton><SegButton $w={27}><u>U</u></SegButton><SegButton $w={12}><Caret /></SegButton></Seg>
                <Seg><SegButton $w={24}><Svg w={15}><path d="M1 1h14v14H1zM8 1v14M1 8h14" stroke="#aaa" strokeDasharray="1 1" /><path d="M1 15h14" stroke="#888" strokeWidth="1.500" /></Svg></SegButton><SegButton $w={12}><Caret /></SegButton></Seg>
                <Seg>
                  <SegButton $w={24}><Svg w={17} h={18} vb="0 0 17 18"><path d="m4 8 5-5 5 5-5 4z" fill="#fff" stroke="#888" /><path d="M14 8q2 3 1 4t-2-1z" fill="#6fa9e4" /><path d="M1 14h15v3H1z" stroke="#ccc" fill="#f5f5f5" /></Svg></SegButton>
                  <SegButton $w={12}><Caret /></SegButton>
                  <SegButton $w={24}><Svg w={18} h={19} vb="0 0 18 19"><text x="9" y="12" fontSize="14" textAnchor="middle" fill="#777" fontFamily="Inter, sans-serif">A</text><path d="M0 14h18v5H0z" fill="#f9686c" /></Svg></SegButton>
                  <SegButton $w={12}><Caret /></SegButton>
                </Seg>
              </Line>
            </Rows>
          </Group>
          <Group $w={165} $pad={8}>
            <Rows>
              <Line>
                <Seg>{["top", "mid", "bot"].map((k) => <SegButton key={k} $on={k === "bot"} aria-label={k}><Lines rows={alignRow(k)} /></SegButton>)}</Seg>
                <Seg><SegButton $w={33}><Svg w={17}><text x="1" y="12" fontSize="10" fill="#777" fontFamily="Inter, sans-serif" transform="rotate(-45 6 9)">ab</text><path d="m6 15 8-8M14 7h-3M14 7v3" stroke="#6fa9e4" strokeWidth="1.300" /></Svg><Caret /></SegButton></Seg>
              </Line>
              <Line>
                <Seg>{["left", "center", "right"].map((k) => <SegButton key={k} aria-label={k}><Lines rows={alignRow(k)} /></SegButton>)}</Seg>
                <Seg><SegButton aria-label="decrease indent"><Indent out /></SegButton><SegButton aria-label="increase indent"><Indent /></SegButton></Seg>
              </Line>
            </Rows>
          </Group>
          <Group $w={137} $pad={12}>
            <Rows>
              <StackItem><Svg w={18} vb="0 0 19 16"><path d="M1 2h11v12H1zM3 5h7M3 8h12q3 2 0 4h-3M3 11h5" stroke="#999" /><path d="M13 9v6l-4-3z" fill="#6fa9e4" /></Svg>Wrap Text</StackItem>
              <StackItem><Svg w={18}><path d="M1 .5h14v15H1zM1 4.500h14M1 11.500h14M8 .5v4M8 11.500v4" stroke="#b5b5b5" /><path d="M3 8h10M5 6 3 8l2 2M11 6l2 2-2 2" stroke="#6fa9e4" strokeWidth="1.300" /></Svg>Merge &amp; Center <Caret /></StackItem>
            </Rows>
          </Group>
          <Group $w={172} $pad={8}>
            <Rows>
              <Combo $w={155}><select aria-label="Number format"><option>General</option></select><Caret /></Combo>
              <Line $gap={3}>
                <Seg>
                  <SegButton $w={23}>$</SegButton><SegButton $w={13}><Caret /></SegButton><SegButton>%</SegButton>
                  <SegButton aria-label="Comma style"><Svg w={8} h={14} vb="0 0 8 14"><path d="M1 1q7 0 6 6-1 4-5 6 4-6-1-8z" fill="#777" /></Svg></SegButton>
                </Seg>
                <Seg>
                  <SegButton><Svg w={20} h={18} vb="0 0 20 18"><text x="20" y="8" fontSize="8" textAnchor="end" fill="#666" fontFamily="Inter, sans-serif">.0</text><text x="20" y="17" fontSize="8" textAnchor="end" fill="#666" fontFamily="Inter, sans-serif">.00</text><path d="m0 5 4-4v2.500h4v3H4V9z" fill="#6fa9e4" /></Svg></SegButton>
                  <SegButton><Svg w={20} h={18} vb="0 0 20 18"><text x="20" y="8" fontSize="8" textAnchor="end" fill="#666" fontFamily="Inter, sans-serif">.00</text><text x="20" y="17" fontSize="8" textAnchor="end" fill="#666" fontFamily="Inter, sans-serif">.0</text><path d="M8 13 4 9v2.500H0v3h4V17z" fill="#6fa9e4" /></Svg></SegButton>
                </Seg>
              </Line>
            </Rows>
          </Group>
          <Group $w={590} $pad={4}>
            <BigItem $w={64}><BigIcon>{Cond}<Caret /></BigIcon><span>Conditional<br />Formatting</span></BigItem>
            <BigItem $w={52}><BigIcon>{TableArt}<Caret /></BigIcon><span>Format<br />as Table</span></BigItem>
            <Gallery>
              <Styles>
                <StyleCell $fg="#555" $kind="selected">Normal</StyleCell>
                <StyleCell $fg="#c5626c" $bg="#ffd7dc">Bad</StyleCell>
                <StyleCell $fg="#5a9a68" $bg="#daf2de">Good</StyleCell>
                <StyleCell $fg="#b98f45" $bg="#fff0c2">Neutral</StyleCell>
                <StyleCell $fg="#f8a45c" $bg="#f5f5f5" $kind="boxed">Calculation</StyleCell>
                <StyleCell $fg="#fff" $bg="#bfbfbf" $kind="double">Check Cell</StyleCell>
                <StyleCell $fg="#a5a5a5" $kind="note">Explanatory T...</StyleCell>
                <StyleCell $fg="#b9879c" $kind="link">Followed Hype...</StyleCell>
                <StyleCell $fg="#5b9bd0" $kind="link">Hyperlink</StyleCell>
                <StyleCell $fg="#8a7c8c" $bg="#fedcbe" $kind="boxed">Input</StyleCell>
              </Styles>
              <Tri dir="right" c="#555" />
            </Gallery>
          </Group>
          <Group $w={164} $pad={5}>
            <BigItem $w={51}><BigIcon><CellArt kind="insert" /><Caret /></BigIcon>Insert</BigItem>
            <BigItem $w={51}><BigIcon><CellArt kind="delete" /><Caret /></BigIcon>Delete</BigItem>
            <BigItem $w={51}><BigIcon><CellArt kind="format" /><Caret /></BigIcon>Format</BigItem>
          </Group>
          <Slot $w={14} />
          <StackList>
            <StackItem><Svg w={15}><path d="M14 4V1H2l6 7-6 7h12v-3" stroke="#888" strokeWidth="2" /></Svg>AutoSum <Caret /></StackItem>
            <StackItem><Svg w={15}><path d="M1 1h14v14H1zM1 3h14" stroke="#bbb" fill="#fff" /><path d="M6.500 4h3v4H13l-5 5-5-5h3.500z" fill="#6fa9e4" /></Svg>Fill <Caret /></StackItem>
            <StackItem><Svg w={15}><path d="m9 1 6 4-7 10-6-4z" fill="#f0a3b3" stroke="#d98797" /></Svg>Clear <Caret /></StackItem>
          </StackList>
          <BigItem $w={52}>
            <BigIcon>
              <Svg w={30} vb="0 0 30 28"><text x="5" y="12" fontSize="14" textAnchor="middle" fill="#6fa9e4" fontFamily="Inter, sans-serif">A</text><text x="5" y="26" fontSize="14" textAnchor="middle" fill="#888" fontFamily="Inter, sans-serif">Z</text><path d="M12 6q9-4 18 0l-7 9v9h-4v-9z" fill="#a2a2a2" /><ellipse cx="21" cy="6" rx="8" ry="2" fill="#e2e2e2" /></Svg>
              <Caret />
            </BigIcon>
            <span>Sort &amp;<br />Filter</span>
          </BigItem>
        </Ribbon>
        <FormulaBar>
          <NameBox>
            <input aria-label="Name box" defaultValue="AY41" />
            <Spinner><Tri dir="up" s={7} /><Tri s={7} /></Spinner>
          </NameBox>
          <FormulaActions><X size={16} /><Check size={17} /><Fx>fx</Fx></FormulaActions>
          <FormulaInput aria-label="Formula" />
          <Caret c="#666" />
        </FormulaBar>

        <SheetArea>
          <SheetTable>
            <thead>
              <HeadRow $h={64}>
                <Corner><Svg w={57} h={56} vb="0 0 57 56"><path d="M0 56 57 0v56z" fill="#dedede" /></Svg></Corner>
                {COLS.map((c) => <ColHead key={c} $on={c === "AY"}>{c}</ColHead>)}
              </HeadRow>
            </thead>
            <tbody>
              {ROWS.map(([n, start, vals]) => {
                const sliver = n === 6 || n === 33;
                return (
                  <SheetRow key={n} $h={sliver ? 4 : 43}>
                    <RowHead>{sliver ? "" : n}</RowHead>
                    <Blank $span={start} />
                    {[...vals].map((v, i) => <Cell key={i} $v={+v}>{sliver ? "" : v}</Cell>)}
                  </SheetRow>
                );
              })}
            </tbody>
          </SheetTable>
          <ScrollThumb />
        </SheetArea>
        <SheetTabs><Tri dir="left" c="#808080" s={10} /><Tri dir="right" c="#808080" s={10} /><SheetTab>Sheet1</SheetTab></SheetTabs>
        <StatusBar>
          Ready
          <ViewButtons>
            <ViewButton $on aria-label="Normal view"><Svg w={13}><path d="M1 1h14v14H1zM1 5.700h14M1 10.300h14M5.700 1v14M10.300 1v14" stroke="#fff" strokeWidth="1.400" /></Svg></ViewButton>
            <ViewButton aria-label="Page layout"><Svg w={13}><path d="M1 1h14v14H1zM4 3.500h8v9H4zM5.500 6h5M5.500 8h5M5.500 10h5" stroke="#e5f2ea" strokeWidth="1.300" /></Svg></ViewButton>
            <ViewButton aria-label="Page break"><Svg w={13}><path d="M1 1h14v14H1zM6 1v8H1M10 1v8H6" stroke="#e5f2ea" strokeWidth="1.400" /></Svg></ViewButton>
          </ViewButtons>
          <Zoom><button aria-label="Zoom out">−</button><input type="range" aria-label="Zoom" min={0} max={100} defaultValue={82} /><button aria-label="Zoom in">+</button><output>296%</output></Zoom>
        </StatusBar>
      </Workbook>

      <FinderWin>
        <FinderTop>
          <FinderTitle>
            <Lights><Light $c="#fc5b57" /><Light $c="#fdb93c" /><Light $c="#28c840" /></Lights>
            <h2><Folder />witch-lights</h2>
          </FinderTitle>
          <FinderTools>
            <ToolSet $split>
              <Tool $w={25} aria-label="Back"><ChevronLeft size={18} color="#bbb" /></Tool>
              <Tool $w={25} aria-label="Forward"><ChevronRight size={18} color="#bbb" /></Tool>
            </ToolSet>
            <ToolSet $before={7}><Tool $w={38} aria-label="Path"><Lines rows={[[0, 3, 11], [2, 6, 11], [4, 9, 11], [4, 12, 11]]} c="#6b6b6b" /><ChevronDown size={9} strokeWidth={4} /></Tool></ToolSet>
            <ToolSet $before={73}>
              <Tool $w={27} $joined aria-label="Icons"><Svg w={12}><path d="M1.500 2h4v4h-4zM10.500 2h4v4h-4zM1.500 10h4v4h-4zM10.500 10h4v4h-4z" stroke="#6b6b6b" strokeWidth="1.600" /></Svg></Tool>
              <Tool $w={27} $joined $on aria-label="List"><Lines rows={[[0, 3, 16], [0, 6, 16], [0, 9, 16], [0, 12, 16]]} c="#fff" /></Tool>
              <Tool $w={27} $joined aria-label="Columns"><Svg><path d="M.7 3h14.600v10H.7zM5.500 3v10M10.500 3v10" stroke="#6b6b6b" strokeWidth="1.200" /></Svg></Tool>
              <Tool $w={27} $joined aria-label="Cover flow"><Svg w={18}><path d="M4.500 4h7v8h-7zM2.500 3v10M.5 3v10M13.500 3v10M15.500 3v10" stroke="#6b6b6b" /></Svg></Tool>
            </ToolSet>
            <ToolSet $before={7}><Tool $w={38} aria-label="Arrange"><Svg><path d="M1 2h3v2H1zM6.500 2h3v2h-3zM12 2h3v2h-3zM1 9h3v4H1zM6.500 9h3v4h-3zM12 9h3v4h-3zM0 6.500h16" stroke="#6b6b6b" /></Svg><ChevronDown size={9} strokeWidth={4} /></Tool></ToolSet>
            <ToolSet $before={7}><Tool $w={38} aria-label="Share"><Share size={15} strokeWidth={1.6} /></Tool></ToolSet>
            <ToolSet $before={46}><Tool $w={38} aria-label="Quick look"><Svg w={18}><path d="M0 8q8-11 16 0-8 11-16 0z" fill="#6b6b6b" /><circle cx="8" cy="8" r="3" fill="#6b6b6b" stroke="#fafafa" strokeWidth="1.500" /></Svg></Tool></ToolSet>
            <ToolSet $before={7}><Tool $w={38} aria-label="Actions"><Svg w={15}><circle cx="8" cy="8" r="4" stroke="#6b6b6b" strokeWidth="3.500" /><circle cx="8" cy="8" r="6.600" stroke="#6b6b6b" strokeWidth="2.500" strokeDasharray="2.600 2.600" /></Svg><ChevronDown size={9} strokeWidth={4} /></Tool></ToolSet>
            <ToolSet $before={46}><Tool $w={38} aria-label="Connect"><Svg><path d="M4 8V1h9v5M4 8h4M7 9v4M1 13.500h6M9 7h5v5H9zM8 14.500h7" stroke="#6b6b6b" strokeWidth="1.300" /></Svg></Tool></ToolSet>
            <FinderSearch><Search size={13} color="#888" /><input aria-label="Search" placeholder="Search" /></FinderSearch>
          </FinderTools>
        </FinderTop>
        <FinderBody>
          <Sidebar>
            <SideSection title="Favorites" items={FAVORITES} h={458} />
            <SideSection title="Devices" items={DEVICES} h={203} />
            <SideSection title="Tags" items={[["tag", "notes"], ["tag", ""]]} h={50} />
          </Sidebar>
          <FileTable>
            <thead><FileHead><th>Name<ChevronUp size={10} strokeWidth={3} /></th><th>Date Modified</th><th>Size</th><th>Kind</th><th /></FileHead></thead>
            <Files list={FILES} h={538} />
            <Files list={ARDUINO} h={21} shift={1} />
            <Files list={SKETCHES} h={186} />
          </FileTable>
        </FinderBody>
      </FinderWin>

      <Dock>
        {APPS.map((e) => <DockEntryView key={e.name} e={e} />)}
        <DockRule />
        {STACKS.map((e) => <DockEntryView key={e.name} e={e} />)}
      </Dock>

      <MenuBar>
        <Svg w={15} h={16} vb="0 0 15 16"><path d="M10.200.3q.1 2-1.200 3-1 .8-2 .7 0-1.800 1.200-2.800.9-.8 2-.9zM13 5.500q-1.700 1.100-1.500 3 .1 2 2 2.800-1.600 4.200-3.400 4.200-.6 0-1.300-.4-1-.4-2.100 0-.8.4-1.300.4C3.500 15.500 1.500 12.100 1.500 9.200c0-3 1.800-4.700 3.700-4.700q.8 0 2 .6 1-.7 2.300-.7 2.200.1 3.500 1.100z" fill="#222" /></Svg>
        <MenuList>
          {["Finder", "File", "Edit", "View", "Go", "Window", "Help"].map((m) => <MenuItem key={m} $bold={m === "Finder"}>{m}</MenuItem>)}
        </MenuList>
        <StatusArea>
          <StatusItem $w={25}><Svg><path d="M8 .7 14 2v6q-.5 5-6 7.300Q2.500 13 2 8V2z" stroke="#333" strokeWidth="1.200" /><path d="M10.500 5Q8 3.500 6.500 5T8 8t1.500 3-4-.2" stroke="#333" strokeWidth="1.400" /></Svg></StatusItem>
          <StatusItem $w={56}><NetSpeed><span>443 kB/s</span><span>0.3 kB/s</span></NetSpeed></StatusItem>
          <StatusItem $w={20}><Svg><path d="M1 3h6" stroke="#2d8c2f" strokeWidth="2" /><path d="M4 5v11" stroke="#b5b1ac" strokeWidth="6" strokeDasharray="1.500 .8" /><path d="M12 4v12" stroke="#d98a84" strokeWidth="6" strokeDasharray="1.500 .8" /><path d="m12 0 3 3H9z" fill="#d98a84" /></Svg></StatusItem>
          <StatusItem $w={36}><Radio size={20} color="#333" /></StatusItem>
          <StatusItem $w={22}><Svg><circle cx="8" cy="8" r="7.500" fill="#1568d6" /><path d="m3 2 5 5 5-5" stroke="#dcd8d2" strokeWidth="2" /></Svg></StatusItem>
          <StatusItem $w={28}>13</StatusItem>
          {EXTRAS.map(([w, icon], i) => <StatusItem key={i} $w={w}>{icon}</StatusItem>)}
          <StatusItem $w={148}>Tue Apr 24&nbsp; 11:15 PM</StatusItem>
          <StatusItem $w={32}><Search size={15} color="#444" /></StatusItem>
          <StatusItem $w={32}><List size={20} color="#999" /></StatusItem>
        </StatusArea>
      </MenuBar>
    </Desktop>
  );
}
